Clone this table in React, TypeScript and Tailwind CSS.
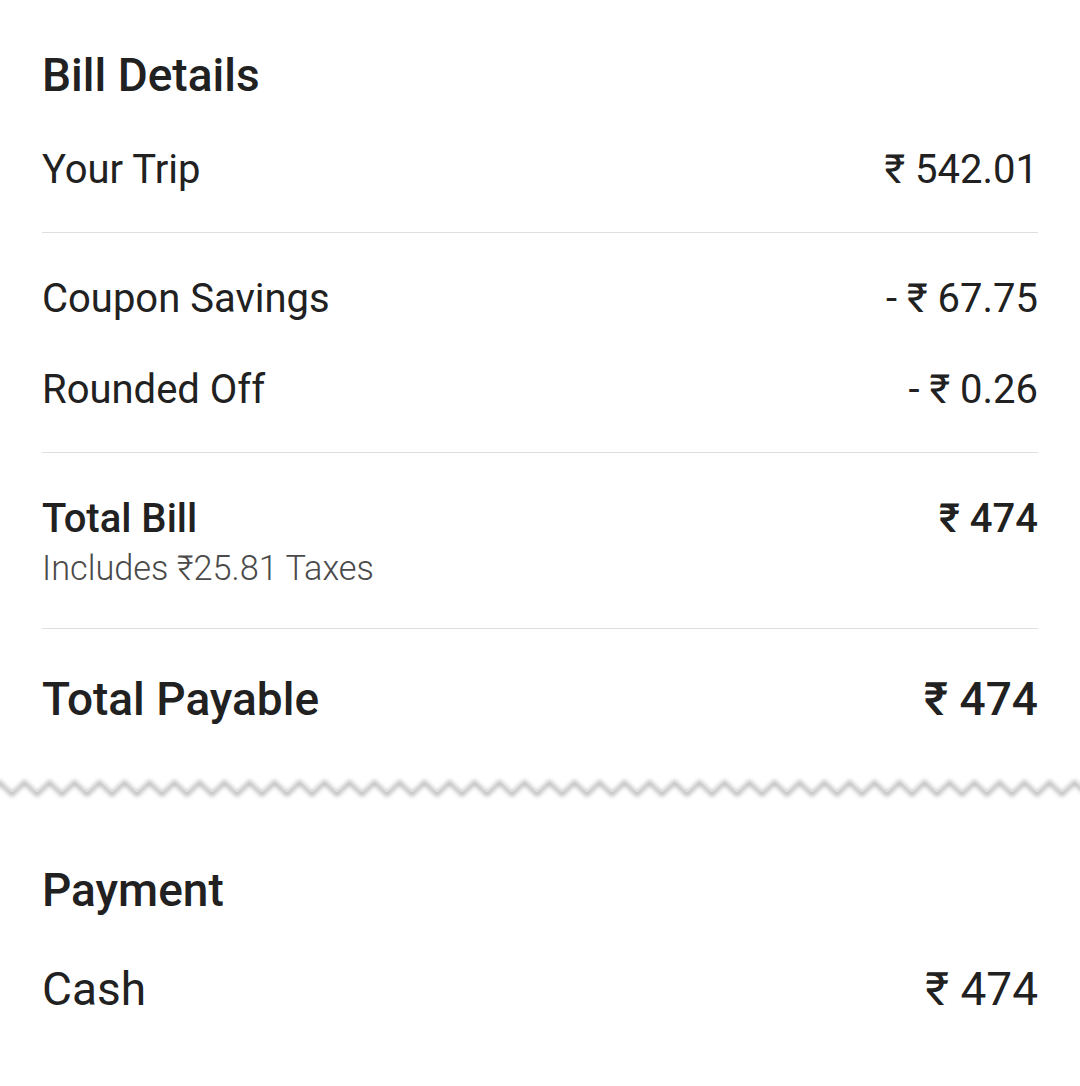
const FONT = "font-['Roboto','Noto_Sans',sans-serif]";

interface LineItem {
  label: string;
  amount: string;
}

const adjustments: LineItem[] = [
  { label: 'Coupon Savings', amount: '- ₹ 67.75' },
  { label: 'Rounded Off', amount: '- ₹ 0.26' },
];

function Divider({ className = '' }: { className?: string }) {
  return <div className={`mx-[42px] h-px bg-[#dedede] ${className}`} />;
}

function Row({ label, amount, className = '' }: LineItem & { className?: string }) {
  return (
    <div className={`flex items-center justify-between px-[42px] text-[40px] text-[#212121] ${className}`}>
      <span>{label}</span>
      <span>{amount}</span>
    </div>
  );
}

// torn receipt edge between the bill and the payment section
function ZigzagEdge() {
  const teeth = 45;
  let d = 'M -13 23';
  for (let i = 0; i < teeth; i++) {
    const x = -13 + i * 25;
    d += ` L ${x + 12.5} 11 L ${x + 25} 23`;
  }
  return (
    <svg width="1080" height="40" viewBox="0 0 1080 40" className="block">
      <defs>
        <filter id="edge-shadow" x="-5%" y="-50%" width="110%" height="200%">
          <feGaussianBlur stdDeviation="2" />
        </filter>
      </defs>
      <path d={d} fill="none" stroke="#b0b0b0" strokeWidth="3.5" filter="url(#edge-shadow)" transform="translate(0 2.5)" />
      <path d={d} fill="none" stroke="#e2e2e2" strokeWidth="1" />
    </svg>
  );
}

export default function App() {
  return (
    <div className={`w-[1080px] h-[1086px] bg-white overflow-hidden ${FONT}`}>
      {/* ── Bill details ── */}
      <div className="pt-[30px]">
        <h2 className="flex h-[90px] items-center px-[42px] text-[46px] font-medium text-[#212121]">
          Bill Details
        </h2>
        <Row label="Your Trip" amount="₹ 542.01" className="h-[100px]" />
        <Divider className="mt-[12px]" />

        <div className="mt-[21px]">
          <Row {...adjustments[0]} className="h-[90px]" />
          <Row {...adjustments[1]} className="h-[92px]" />
        </div>
        <Divider className="mt-[16px]" />

        <div className="flex justify-between px-[42px] pt-[41px] text-[#212121]">
          <div>
            <p className="flex h-[50px] items-center text-[40px] font-medium">Total Bill</p>
            <p className="flex h-[50px] items-center text-[34.3px] font-light text-[#4a4a4a]">
              Includes ₹25.81 Taxes
            </p>
          </div>
          <p className="flex h-[50px] items-center text-[40px] font-medium">₹ 474</p>
        </div>
        <Divider className="mt-[34px]" />

        <div className="flex h-[140px] items-center justify-between px-[42px] text-[46px] font-medium text-[#212121]">
          <span>Total Payable</span>
          <span>₹ 474</span>
        </div>
      </div>

      <ZigzagEdge />

      {/* ── Payment ── */}
      <div className="pt-[31px]">
        <h2 className="flex h-[100px] items-center px-[42px] text-[46px] font-medium text-[#212121]">
          Payment
        </h2>
        <Row label="Cash" amount="₹ 474" className="h-[98px] text-[46px]" />
      </div>
    </div>
  );
}
